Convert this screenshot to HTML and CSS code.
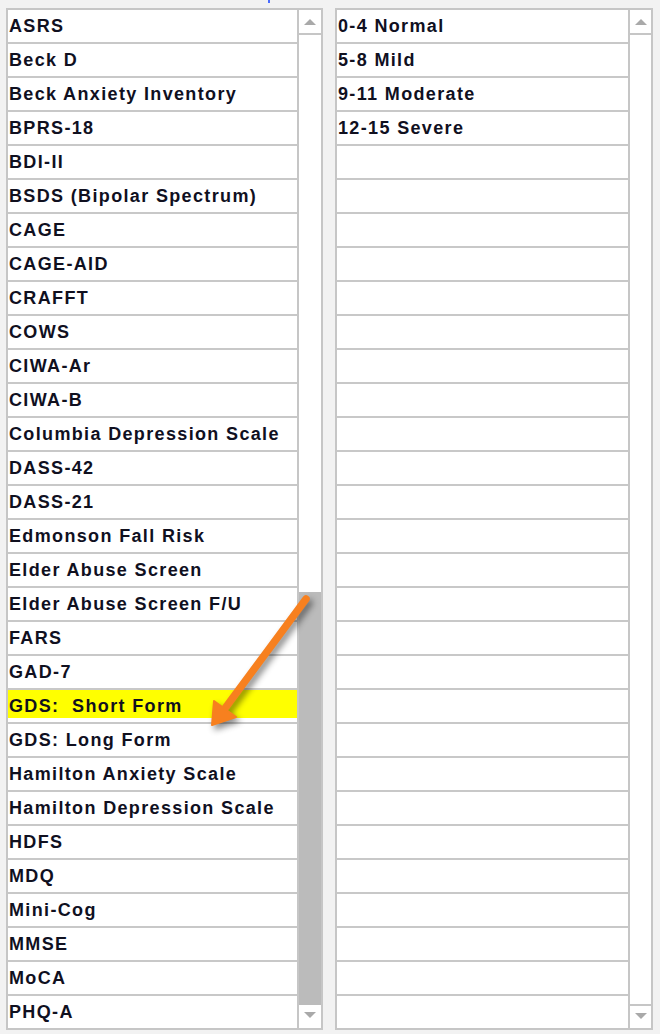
FILE: index.html
```html
<!DOCTYPE html>
<html>
<head>
<meta charset="utf-8">
<link rel="stylesheet" href="styles.css">
</head>
<body>
<div class="page">
  <div class="topbar"><span class="tick"></span></div>
  <div class="panels">
    <div class="box box-left">
      <ul class="list">
        <li>ASRS</li>
        <li>Beck D</li>
        <li>Beck Anxiety Inventory</li>
        <li>BPRS-18</li>
        <li>BDI-II</li>
        <li>BSDS (Bipolar Spectrum)</li>
        <li>CAGE</li>
        <li>CAGE-AID</li>
        <li>CRAFFT</li>
        <li>COWS</li>
        <li>CIWA-Ar</li>
        <li>CIWA-B</li>
        <li>Columbia Depression Scale</li>
        <li>DASS-42</li>
        <li>DASS-21</li>
        <li>Edmonson Fall Risk</li>
        <li>Elder Abuse Screen</li>
        <li>Elder Abuse Screen F/U</li>
        <li>FARS</li>
        <li>GAD-7</li>
        <li class="selected">GDS:&nbsp; Short Form</li>
        <li>GDS: Long Form</li>
        <li>Hamilton Anxiety Scale</li>
        <li>Hamilton Depression Scale</li>
        <li>HDFS</li>
        <li>MDQ</li>
        <li>Mini-Cog</li>
        <li>MMSE</li>
        <li>MoCA</li>
        <li>PHQ-A</li>
      </ul>
      <div class="scroll">
        <div class="sbtn up"><span class="tri-up"></span></div>
        <div class="track"><div class="thumb"></div></div>
        <div class="sbtn down"><span class="tri-down"></span></div>
      </div>
    </div>
    <div class="box box-right">
      <ul class="list">
        <li>0-4 Normal</li>
        <li>5-8 Mild</li>
        <li>9-11 Moderate</li>
        <li>12-15 Severe</li>
        <li></li><li></li><li></li><li></li><li></li><li></li>
        <li></li><li></li><li></li><li></li><li></li><li></li>
        <li></li><li></li><li></li><li></li><li></li><li></li>
        <li></li><li></li><li></li><li></li><li></li><li></li>
        <li></li><li></li>
      </ul>
      <div class="scroll">
        <div class="sbtn up"><span class="tri-up"></span></div>
        <div class="track"></div>
        <div class="sbtn down bordered"><span class="tri-down"></span></div>
      </div>
    </div>
  </div>
  <svg class="arrow" width="660" height="1034" viewBox="0 0 660 1034">
    <g class="arrow-shape">
      <line x1="306" y1="599" x2="226" y2="707" stroke="#f7801f" stroke-width="7.5" stroke-linecap="round"/>
      <polygon points="212,725 214,701 236,717" fill="#f7801f" stroke="#f7801f" stroke-width="2" stroke-linejoin="round"/>
    </g>
  </svg>
</div>
</body>
</html>
```

FILE: styles.css
```css
html, body {
  margin: 0;
  padding: 0;
  background: #f2f2f2;
}

.page {
  position: relative;
  width: 660px;
  height: 1034px;
  overflow: hidden;
  background: #f2f2f2;
  font-family: "Liberation Sans", Arial, sans-serif;
}

.topbar {
  height: 8px;
  display: flex;
  align-items: flex-start;
}

.tick {
  display: block;
  width: 2px;
  height: 3px;
  margin-left: 268px;
  background: #4a6cff;
}

.panels {
  display: flex;
  gap: 12px;
  padding-left: 6px;
}

.box {
  display: grid;
  border: 2px solid #c6c6c6;
  background: #ffffff;
}

.box-left {
  grid-template-columns: 289px 24px;
}

.box-right {
  grid-template-columns: 291px 23px;
}

.list {
  list-style: none;
  margin: 0;
  padding: 0;
}

.list li {
  height: 32px;
  line-height: 32px;
  padding-left: 1px;
  border-bottom: 2px solid #c8c8c8;
  font-size: 18px;
  font-weight: bold;
  letter-spacing: 1.35px;
  color: #10101f;
  white-space: nowrap;
  overflow: hidden;
}

.list li:last-child {
  border-bottom: none;
}

.list li.selected {
  background: linear-gradient(#ffff00 0, #ffff00 28px, #ffffff 28px);
}

.scroll {
  display: flex;
  flex-direction: column;
  border-left: 2px solid #c6c6c6;
  background: #ffffff;
}

.sbtn {
  display: flex;
  justify-content: center;
  align-items: center;
}

.sbtn.up {
  height: 23px;
  border-bottom: 2px solid #c6c6c6;
}

.sbtn.down {
  height: 23px;
  padding-bottom: 3px;
  box-sizing: border-box;
}

.sbtn.down.bordered {
  border-top: 2px solid #c6c6c6;
  height: 24px;
}

.tri-up {
  width: 0;
  height: 0;
  border-left: 6px solid transparent;
  border-right: 6px solid transparent;
  border-bottom: 6px solid #a9a9a9;
}

.tri-down {
  width: 0;
  height: 0;
  border-left: 6px solid transparent;
  border-right: 6px solid transparent;
  border-top: 6px solid #a9a9a9;
}

.track {
  flex: 1;
  display: flex;
  flex-direction: column;
  justify-content: flex-end;
}

.thumb {
  height: 413px;
  background: #bbbbbb;
}

.arrow {
  position: absolute;
  left: 0;
  top: 0;
  pointer-events: none;
}

.arrow-shape {
  filter: drop-shadow(3px 4px 3px rgba(0, 0, 0, 0.45));
}
```
